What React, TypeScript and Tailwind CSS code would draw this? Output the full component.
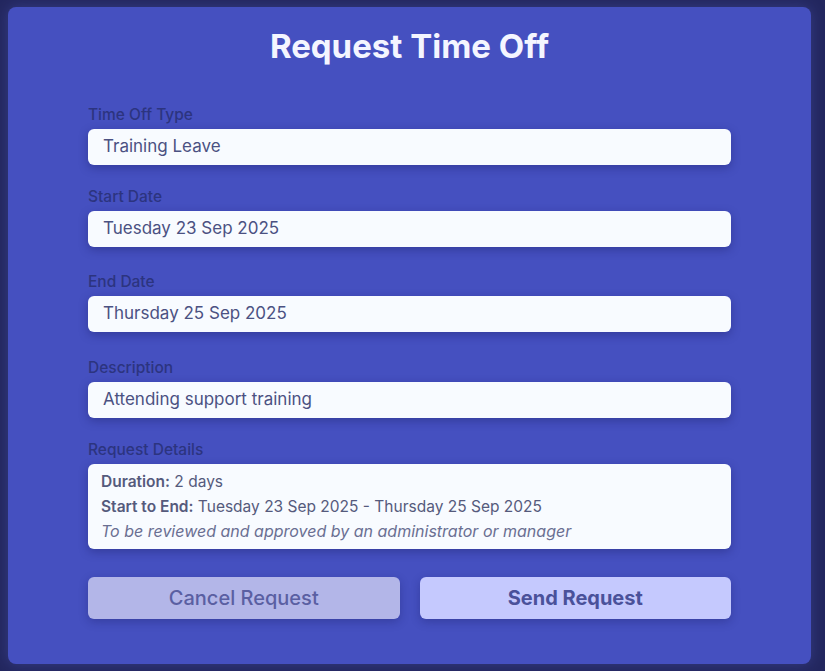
const font = { fontFamily: 'Inter, "Noto Sans", sans-serif' };

function Label({ children }: { children: string }) {
  return <div className="text-[15.5px] leading-5 font-medium text-[#2c347f] mb-1">{children}</div>;
}

function Field({ label, value, className }: { label: string; value: string; className?: string }) {
  return (
    <div className={className}>
      <Label>{label}</Label>
      <div className="h-9 rounded-md bg-[#f8fbff] px-[15px] flex items-center text-[17px] text-[#4b5182] shadow-[0_3px_10px_rgba(20,24,90,0.35)]">
        {value}
      </div>
    </div>
  );
}

export default function App() {
  return (
    <div className="min-h-[671px] w-[825px] bg-[#23275f] pt-[7px] pl-2" style={font}>
      <div className="w-[803px] h-[657px] rounded-lg bg-[#4550c0] px-20 pt-[21px] shadow-[0_0_14px_rgba(90,100,200,0.35)]">
        <h1 className="text-center text-[33px] leading-9 font-bold text-[#f4f5ff] mb-[41px]">
          Request Time Off
        </h1>

        <Field label="Time Off Type" value="Training Leave" />
        <Field className="mt-[22px]" label="Start Date" value="Tuesday 23 Sep 2025" />
        <Field className="mt-[25px]" label="End Date" value="Thursday 25 Sep 2025" />
        <Field className="mt-[26px]" label="Description" value="Attending support training" />

        <div className="mt-[22px]">
          <Label>Request Details</Label>
          <div className="h-[85px] rounded-md bg-[#f8fbff] px-[13px] pt-[5px] text-[15.5px] leading-[25px] text-[#555a7c] shadow-[0_3px_10px_rgba(20,24,90,0.35)]">
            <div>
              <span className="font-semibold">Duration:</span> 2 days
            </div>
            <div>
              <span className="font-semibold">Start to End:</span> Tuesday 23 Sep 2025 - Thursday 25 Sep 2025
            </div>
            <div className="italic text-[16px] text-[#6a6f92]">
              To be reviewed and approved by an administrator or manager
            </div>
          </div>
        </div>

        <div className="mt-7 flex gap-5">
          <button className="flex-1 h-[42px] rounded-md bg-[#b3b6e8] text-[20px] font-medium text-[#5a5fa2] shadow-[0_3px_10px_rgba(20,24,90,0.3)]">
            Cancel Request
          </button>
          <button className="flex-1 h-[42px] rounded-md bg-[#c5c9fe] text-[20px] font-bold text-[#4a519a] shadow-[0_3px_10px_rgba(20,24,90,0.3)]">
            Send Request
          </button>
        </div>
      </div>
    </div>
  );
}
